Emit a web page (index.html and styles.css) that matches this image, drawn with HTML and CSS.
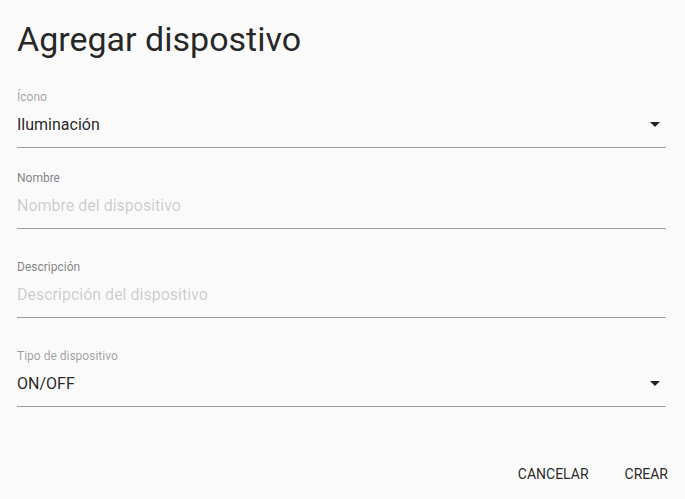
FILE: index.html
```html
<!DOCTYPE html>
<html lang="es">
<head>
<meta charset="utf-8">
<link rel="stylesheet" href="styles.css">
</head>
<body>
<div class="dialog">
  <h1 class="title">Agregar dispostivo</h1>
  <div class="fields">
    <div class="field first">
      <label class="label light">Ícono</label>
      <div class="control">
        <span class="value">Iluminación</span>
        <svg class="arrow" width="24" height="24" viewBox="0 0 24 24"><path d="M7 10l5 5 5-5z"/></svg>
      </div>
    </div>
    <div class="field second">
      <label class="label">Nombre</label>
      <div class="control"><span class="placeholder">Nombre del dispositivo</span></div>
    </div>
    <div class="field">
      <label class="label">Descripción</label>
      <div class="control"><span class="placeholder">Descripción del dispositivo</span></div>
    </div>
    <div class="field">
      <label class="label light">Tipo de dispositivo</label>
      <div class="control">
        <span class="value">ON/OFF</span>
        <svg class="arrow" width="24" height="24" viewBox="0 0 24 24"><path d="M7 10l5 5 5-5z"/></svg>
      </div>
    </div>
  </div>
  <div class="actions">
    <button class="btn">CANCELAR</button>
    <button class="btn">CREAR</button>
  </div>
</div>
</body>
</html>
```
FILE: styles.css
```css
html, body {
  margin: 0;
  padding: 0;
  background: #fafafa;
}
body {
  font-family: Roboto, "Noto Sans", sans-serif;
  color: rgba(0, 0, 0, 0.87);
}
.dialog {
  width: 685px;
  height: 499px;
  box-sizing: border-box;
  padding: 0 19px 0 17px;
  display: flex;
  flex-direction: column;
}
.title {
  margin: 0;
  padding-top: 17px;
  font-size: 34px;
  font-weight: 400;
  line-height: 44px;
  color: rgba(0, 0, 0, 0.87);
}
.fields {
  display: flex;
  flex-direction: column;
  margin-top: 28px;
}
.field {
  display: flex;
  flex-direction: column;
  margin-top: 30px;
}
.field.first {
  margin-top: 0;
}
.field.second {
  margin-top: 22px;
}
.label {
  font-size: 12px;
  line-height: 16px;
  color: rgba(0, 0, 0, 0.5);
}
.label.light {
  color: rgba(0, 0, 0, 0.38);
}
.control {
  display: flex;
  align-items: center;
  justify-content: space-between;
  height: 43px;
  border-bottom: 1px solid #9e9e9e;
  box-sizing: border-box;
  padding-bottom: 4px;
}
.value {
  font-size: 16px;
  color: rgba(0, 0, 0, 0.87);
}
.placeholder {
  font-size: 16px;
  color: rgba(0, 0, 0, 0.2);
}
.arrow {
  fill: rgba(0, 0, 0, 0.87);
  margin-right: -1px;
}
.actions {
  display: flex;
  justify-content: flex-end;
  gap: 4px;
  margin-top: auto;
  margin-right: -19px;
  padding: 0 1px 7px 0;
}
.btn {
  background: none;
  border: none;
  font-family: Roboto, sans-serif;
  font-size: 14px;
  color: rgba(0, 0, 0, 0.87);
  height: 36px;
  padding: 0 16px;
  min-width: 64px;
  letter-spacing: 0;
}
```
